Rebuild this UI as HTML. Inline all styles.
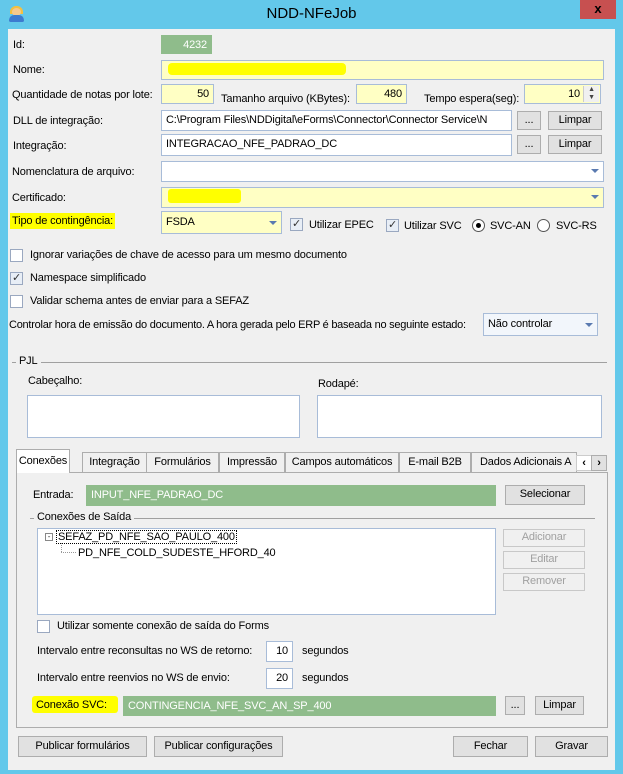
<!DOCTYPE html>
<html><head><meta charset="utf-8"><style>
*{box-sizing:border-box;margin:0;padding:0}
body{width:623px;height:774px;background:#63c8ea;font-family:"Liberation Sans",sans-serif;font-size:11px;color:#000;position:relative;overflow:hidden;letter-spacing:-0.15px}
.a{position:absolute;white-space:nowrap}
.client{position:absolute;left:8px;top:29px;width:607px;height:741px;background:#f0f0f0}
.box{position:absolute;border:1px solid #a8bcd8;background:#fff;padding:2px 4px;line-height:14px;white-space:nowrap;overflow:hidden}
.y{background:#ffffc4}
.g{background:#8fbc8b;color:#fff;border-color:#8fbc8b}
.r{text-align:right}
.btn{position:absolute;border:1px solid #adadad;background:#e1e1e1;text-align:center;line-height:17px;white-space:nowrap}
.dis{color:#a0a0a0;border-color:#c8c8c8;background:#f0f0f0}
.hl{position:absolute;background:#ffff00}
.cb{position:absolute;width:13px;height:13px;border:1px solid #9aa8c0;background:#fff;font-size:11px;line-height:11px;text-align:center;color:#333}
.cb.c{background:#e8eef6}
.rad{position:absolute;width:13px;height:13px;border:1px solid #555;border-radius:50%;background:#fff}
.arr{position:absolute;right:4px;top:7px;width:0;height:0;border-left:4px solid transparent;border-right:4px solid transparent;border-top:4px solid #5a7ab0}
.tab{position:absolute;top:452px;height:21px;border:1px solid #adadad;background:#f0f0f0;line-height:18px;text-align:center}
</style></head><body>
<div class="a" style="left:10px;top:6px;width:13px;height:8px;border-radius:6px 6px 0 0;background:#f4c040"></div>
<div class="a" style="left:12px;top:8px;width:9px;height:8px;border-radius:50%;background:#f6c98e"></div>
<div class="a" style="left:9px;top:15px;width:15px;height:7px;border-radius:6px 6px 2px 2px;background:#3d7bd0"></div>
<div class="a" style="left:0;top:5px;width:623px;text-align:center;font-size:15px;color:#000;letter-spacing:0">NDD-NFeJob</div>
<div class="a" style="left:580px;top:0;width:36px;height:19px;background:#c75050;color:#000;font-weight:bold;text-align:center;font-size:13px;line-height:18px;letter-spacing:0">x</div>
<div class="client"></div>

<div class="a" style="left:13px;top:39px">Id:</div>
<div class="box g r" style="left:161px;top:35px;width:51px;height:19px">4232</div>
<div class="a" style="left:13px;top:64px">Nome:</div>
<div class="box y" style="left:161px;top:60px;width:443px;height:20px"></div>
<div class="hl" style="left:168px;top:63px;width:178px;height:12px;border-radius:4px"></div>

<div class="a" style="left:12px;top:89px">Quantidade de notas por lote:</div>
<div class="box y r" style="left:161px;top:84px;width:53px;height:20px">50</div>
<div class="a" style="left:221px;top:93px">Tamanho arquivo (KBytes):</div>
<div class="box y r" style="left:356px;top:84px;width:51px;height:20px">480</div>
<div class="a" style="left:424px;top:93px">Tempo espera(seg):</div>
<div class="box y r" style="left:524px;top:84px;width:77px;height:20px;padding-right:20px">10</div>
<div class="a" style="left:583px;top:86px;width:16px;height:16px;background:#f0f0f0;border-left:1px solid #ccc;font-size:7px;line-height:8px;text-align:center;color:#444">▲<br>▼</div>

<div class="a" style="left:13px;top:115px">DLL de integração:</div>
<div class="box" style="left:161px;top:110px;width:351px;height:21px">C:\Program Files\NDDigital\eForms\Connector\Connector Service\N</div>
<div class="btn" style="left:517px;top:111px;width:24px;height:19px">...</div>
<div class="btn" style="left:548px;top:111px;width:54px;height:19px">Limpar</div>

<div class="a" style="left:13px;top:140px">Integração:</div>
<div class="box" style="left:161px;top:134px;width:351px;height:22px;line-height:15px">INTEGRACAO_NFE_PADRAO_DC</div>
<div class="btn" style="left:517px;top:135px;width:24px;height:19px">...</div>
<div class="btn" style="left:548px;top:135px;width:54px;height:19px">Limpar</div>

<div class="a" style="left:12px;top:166px">Nomenclatura de arquivo:</div>
<div class="box" style="left:161px;top:161px;width:443px;height:21px"><div class="arr"></div></div>
<div class="a" style="left:12px;top:192px">Certificado:</div>
<div class="box y" style="left:161px;top:187px;width:443px;height:21px"><div class="arr"></div></div>
<div class="hl" style="left:168px;top:189px;width:73px;height:14px;border-radius:3px"></div>

<div class="hl" style="left:10px;top:213px;width:105px;height:16px"></div>
<div class="a" style="left:12px;top:215px">Tipo de contingência:</div>
<div class="box y" style="left:161px;top:211px;width:121px;height:23px;line-height:16px">FSDA<div class="arr" style="top:9px"></div></div>
<div class="cb c" style="left:290px;top:218px">✓</div>
<div class="a" style="left:309px;top:219px">Utilizar EPEC</div>
<div class="cb c" style="left:386px;top:219px">✓</div>
<div class="a" style="left:404px;top:220px">Utilizar SVC</div>
<div class="rad" style="left:472px;top:219px"><div style="position:absolute;left:3px;top:3px;width:5px;height:5px;border-radius:50%;background:#000"></div></div>
<div class="a" style="left:490px;top:220px">SVC-AN</div>
<div class="rad" style="left:537px;top:219px"></div>
<div class="a" style="left:556px;top:220px">SVC-RS</div>

<div class="cb" style="left:10px;top:249px"></div>
<div class="a" style="left:30px;top:249px">Ignorar variações de chave de acesso para um mesmo documento</div>
<div class="cb c" style="left:10px;top:272px">✓</div>
<div class="a" style="left:30px;top:272px">Namespace simplificado</div>
<div class="cb" style="left:10px;top:295px"></div>
<div class="a" style="left:30px;top:295px">Validar schema antes de enviar para a SEFAZ</div>
<div class="a" style="left:9px;top:319px;letter-spacing:-0.25px">Controlar hora de emissão do documento. A hora gerada pelo ERP é baseada no seguinte estado:</div>
<div class="box" style="left:483px;top:313px;width:115px;height:23px;background:#f2f6fb;line-height:16px">Não controlar<div class="arr" style="top:9px"></div></div>

<div class="a" style="left:12px;top:362px;width:595px;height:1px;background:#a0a0a0"></div>
<div class="a" style="left:16px;top:355px;background:#f0f0f0;padding:0 3px">PJL</div>
<div class="a" style="left:28px;top:375px">Cabeçalho:</div>
<div class="box" style="left:27px;top:395px;width:273px;height:43px"></div>
<div class="a" style="left:318px;top:378px">Rodapé:</div>
<div class="box" style="left:317px;top:395px;width:285px;height:43px"></div>

<div class="a" style="left:16px;top:472px;width:592px;height:256px;border:1px solid #adadad;background:#f0f0f0"></div>
<div class="tab" style="left:16px;top:449px;width:54px;height:24px;background:#fff;border-bottom:none;line-height:22px">Conexões</div>
<div class="tab" style="left:82px;width:65px">Integração</div>
<div class="tab" style="left:146px;width:73px">Formulários</div>
<div class="tab" style="left:219px;width:66px">Impressão</div>
<div class="tab" style="left:285px;width:114px">Campos automáticos</div>
<div class="tab" style="left:399px;width:72px">E-mail B2B</div>
<div class="tab" style="left:471px;width:106px;text-align:left;padding-left:8px;overflow:hidden">Dados Adicionais A</div>
<div class="a" style="left:576px;top:455px;width:16px;height:16px;background:#fff;border:1px solid #ccc;text-align:center;line-height:14px;font-weight:bold">‹</div>
<div class="a" style="left:591px;top:455px;width:16px;height:16px;background:#e1e1e1;border:1px solid #adadad;text-align:center;line-height:14px;font-weight:bold">›</div>

<div class="a" style="left:33px;top:489px">Entrada:</div>
<div class="box g" style="left:86px;top:485px;width:410px;height:21px">INPUT_NFE_PADRAO_DC</div>
<div class="btn" style="left:505px;top:485px;width:80px;height:20px">Selecionar</div>

<div class="a" style="left:30px;top:518px;width:565px;height:1px;background:#a0a0a0"></div>
<div class="a" style="left:34px;top:511px;background:#f0f0f0;padding:0 3px">Conexões de Saída</div>
<div class="box" style="left:37px;top:528px;width:459px;height:87px"></div>
<div class="a" style="left:45px;top:533px;width:8px;height:8px;border:1px solid #888;font-size:8px;line-height:5px;text-align:center;color:#333">-</div>
<div class="a" style="left:56px;top:530px;border:1px dotted #000;padding:0 1px">SEFAZ_PD_NFE_SAO_PAULO_400</div>
<div class="a" style="left:61px;top:543px;width:1px;height:9px;border-left:1px dotted #999"></div>
<div class="a" style="left:61px;top:552px;width:15px;height:1px;border-top:1px dotted #999"></div>
<div class="a" style="left:78px;top:547px">PD_NFE_COLD_SUDESTE_HFORD_40</div>
<div class="btn dis" style="left:503px;top:529px;width:82px;height:18px;line-height:15px">Adicionar</div>
<div class="btn dis" style="left:503px;top:551px;width:82px;height:18px;line-height:15px">Editar</div>
<div class="btn dis" style="left:503px;top:573px;width:82px;height:18px;line-height:15px">Remover</div>

<div class="cb" style="left:37px;top:620px"></div>
<div class="a" style="left:57px;top:620px">Utilizar somente conexão de saída do Forms</div>
<div class="a" style="left:37px;top:645px">Intervalo entre reconsultas no WS de retorno:</div>
<div class="box r" style="left:266px;top:641px;width:27px;height:21px">10</div>
<div class="a" style="left:302px;top:645px">segundos</div>
<div class="a" style="left:37px;top:672px">Intervalo entre reenvios no WS de envio:</div>
<div class="box r" style="left:266px;top:668px;width:27px;height:21px">20</div>
<div class="a" style="left:302px;top:672px">segundos</div>
<div class="hl" style="left:32px;top:696px;width:86px;height:17px;border-radius:3px"></div>
<div class="a" style="left:36px;top:699px">Conexão SVC:</div>
<div class="box g" style="left:123px;top:696px;width:373px;height:20px">CONTINGENCIA_NFE_SVC_AN_SP_400</div>
<div class="btn" style="left:505px;top:696px;width:20px;height:19px">...</div>
<div class="btn" style="left:535px;top:696px;width:49px;height:19px">Limpar</div>

<div class="btn" style="left:18px;top:736px;width:129px;height:21px;line-height:19px">Publicar formulários</div>
<div class="btn" style="left:154px;top:736px;width:129px;height:21px;line-height:19px">Publicar configurações</div>
<div class="btn" style="left:453px;top:736px;width:75px;height:21px;line-height:19px">Fechar</div>
<div class="btn" style="left:535px;top:736px;width:73px;height:21px;line-height:19px">Gravar</div>
</body></html>
